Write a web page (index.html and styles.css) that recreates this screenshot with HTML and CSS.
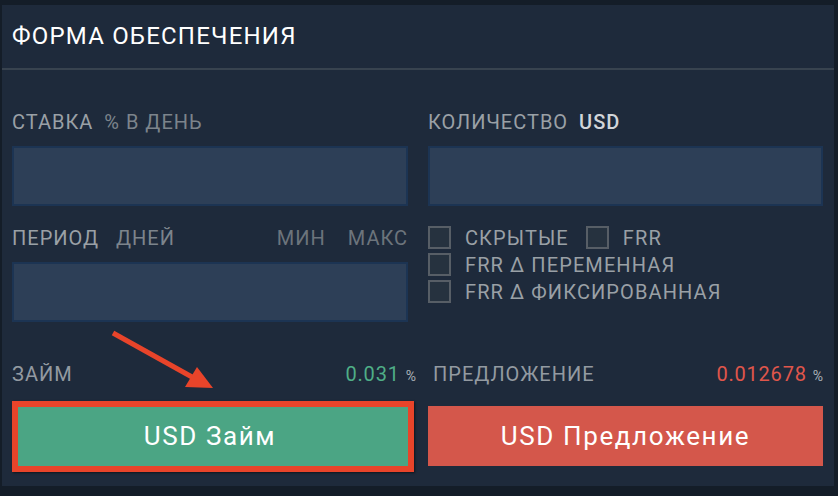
FILE: index.html
```html
<!DOCTYPE html>
<html lang="ru">
<head>
    <meta charset="UTF-8">
    <meta name="viewport" content="width=device-width, initial-scale=1.0">
    <title>Форма обеспечения</title>
    <link rel="stylesheet" href="styles.css">
</head>
<body>
    <section class="panel">
        <h1 class="panel-title">ФОРМА ОБЕСПЕЧЕНИЯ</h1>
        <div class="form">
            <div class="field">
                <label class="label"><span class="main">СТАВКА</span><span class="unit">% В ДЕНЬ</span></label>
                <input class="input" type="text">
            </div>
            <div class="field">
                <label class="label"><span class="main">КОЛИЧЕСТВО</span><span class="unit unit-strong">USD</span></label>
                <input class="input" type="text">
            </div>
            <div class="field">
                <label class="label">
                    <span class="main main-wide">ПЕРИОД</span><span class="unit">ДНЕЙ</span>
                    <span class="limits"><span>МИН</span><span>МАКС</span></span>
                </label>
                <input class="input" type="text">
            </div>
            <div class="options">
                <div class="option-row">
                    <label class="check"><span class="box"></span>СКРЫТЫЕ</label>
                    <label class="check"><span class="box"></span>FRR</label>
                </div>
                <div class="option-row">
                    <label class="check"><span class="box"></span>FRR Δ ПЕРЕМЕННАЯ</label>
                </div>
                <div class="option-row">
                    <label class="check"><span class="box"></span>FRR Δ ФИКСИРОВАННАЯ</label>
                </div>
            </div>
        </div>
        <div class="actions">
            <div class="action">
                <div class="quote quote-bid">
                    <span class="main">ЗАЙМ</span>
                    <span class="rate"><span class="num green">0.031</span><span class="pct">%</span></span>
                </div>
                <button class="btn btn-green">USD Займ</button>
            </div>
            <div class="action">
                <div class="quote quote-ask">
                    <span class="main">ПРЕДЛОЖЕНИЕ</span>
                    <span class="rate"><span class="num red">0.012678</span><span class="pct">%</span></span>
                </div>
                <button class="btn btn-red">USD Предложение</button>
            </div>
        </div>

        <!-- annotation over the screenshot -->
        <div class="mark-box"></div>
        <svg class="mark-arrow" width="120" height="70" viewBox="0 0 120 70">
            <line x1="13" y1="8" x2="92" y2="52" stroke="#e8442a" stroke-width="5"/>
            <polygon points="113,63 97,42 85,62" fill="#e8442a"/>
        </svg>
    </section>
</body>
</html>
```

FILE: styles.css
```css
body {
    margin: 0;
    background-color: #141d28;
    font-family: Roboto, "Liberation Sans", sans-serif;
    color: #9ba1a7;
}
.panel {
    position: relative;
    box-sizing: border-box;
    width: 832px;
    height: 481px;
    margin: 5px 0 0 2px;
    background-color: #1e2a3b;
}
.panel-title {
    margin: 0;
    height: 63px;
    padding: 0 10px;
    line-height: 63px;
    font-size: 24px;
    font-weight: 400;
    letter-spacing: 1.2px;
    color: #ffffff;
    border-bottom: 2px solid #38434f;
}
.form {
    display: grid;
    grid-template-columns: 396px 395px;
    column-gap: 20px;
    row-gap: 20px;
    padding: 40px 11px 0 10px;
}
.label {
    display: flex;
    height: 24px;
    line-height: 24px;
    font-size: 20px;
    letter-spacing: 1px;
    margin-bottom: 12px;
}
.label .main {
    color: #9aa0a6;
    margin-right: 11px;
}
.label .main-wide {
    margin-right: 17px;
}
.label .unit {
    color: #7c848c;
}
.label .unit-strong {
    color: #d2d6da;
    font-weight: 500;
    letter-spacing: 1px;
}
.label .limits {
    margin-left: auto;
    display: flex;
    gap: 22px;
    color: #6c747c;
}
.input {
    display: block;
    box-sizing: border-box;
    width: 100%;
    height: 60px;
    margin: 0;
    background-color: #2d3f57;
    border: 2px solid #1c3453;
    outline: none;
}
.options {
    display: flex;
    flex-direction: column;
    gap: 4px;
}
.option-row {
    display: flex;
    gap: 17px;
    height: 23px;
}
.check {
    display: flex;
    align-items: center;
    font-size: 20px;
    line-height: 24px;
    letter-spacing: 1.1px;
    color: #9aa0a6;
}
.check .box {
    box-sizing: border-box;
    width: 23px;
    height: 23px;
    margin-right: 14px;
    background-color: #26323f;
    border: 2px solid #575e66;
}
.actions {
    display: grid;
    grid-template-columns: 396px 395px;
    column-gap: 20px;
    padding: 40px 11px 0 10px;
}
.quote {
    display: flex;
    justify-content: space-between;
    height: 24px;
    line-height: 24px;
    font-size: 20px;
    letter-spacing: 1px;
    margin-bottom: 20px;
}
.quote .main {
    color: #939aa1;
}
.quote-bid {
    margin-right: -8px;
}
.quote-ask {
    padding-left: 5px;
}
.rate .num {
    letter-spacing: 0.8px;
}
.rate .pct {
    margin-left: 6px;
    font-size: 14px;
    letter-spacing: 0;
    color: #aab1b7;
}
.green {
    color: #4fae87;
}
.red {
    color: #e0564b;
}
.btn {
    display: block;
    width: 100%;
    height: 60px;
    border: none;
    font-family: Roboto, "Liberation Sans", sans-serif;
    font-size: 26px;
    letter-spacing: 1.6px;
    color: #ffffff;
    cursor: pointer;
}
.btn-green {
    background-color: #4ba584;
}
.btn-red {
    background-color: #d4574b;
}
.mark-box {
    position: absolute;
    left: 10px;
    top: 396px;
    width: 402px;
    height: 71px;
    box-sizing: border-box;
    border: 6px solid #e8442a;
    box-shadow: 1px 1px 2px rgba(0, 0, 0, 0.5);
}
.mark-arrow {
    position: absolute;
    left: 98px;
    top: 320px;
}
```
